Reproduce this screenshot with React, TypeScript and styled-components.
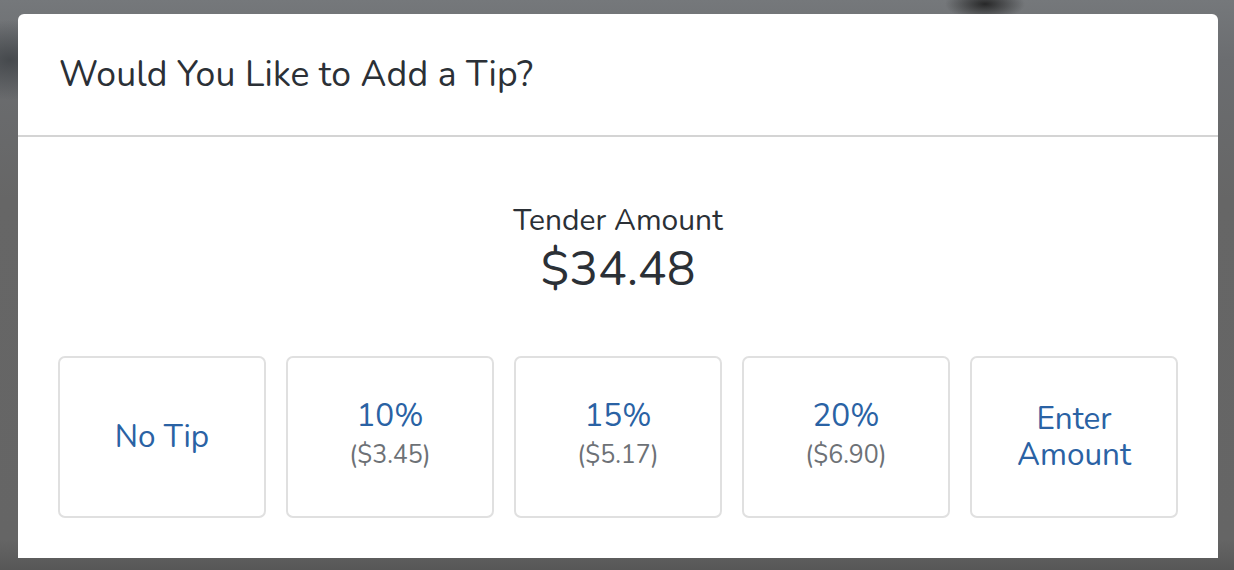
import styled, { createGlobalStyle } from "styled-components";

const GlobalStyle = createGlobalStyle`
    html, body {
        margin: 0;
        padding: 0;
        height: 100%;
    }
    body {
        font-family: "Nunito", "Lato", "Open Sans", sans-serif;
        background: #676767;
    }
`;

const Backdrop = styled.div`
    width: 1234px;
    height: 570px;
    box-sizing: border-box;
    padding: 14px 16px 0 18px;
    overflow: hidden;
    background:
        radial-gradient(ellipse 40px 16px at 985px 4px, rgba(20, 20, 20, 0.8), rgba(20, 20, 20, 0) 100%),
        radial-gradient(ellipse 60px 40px at 10px 60px, rgba(60, 64, 68, 0.8), rgba(60, 64, 68, 0) 100%),
        linear-gradient(180deg, #75787b 0px, #6b6d70 60px, #666666 200px, #656565 540px, #575757 570px);
`;

const Modal = styled.div`
    width: 1200px;
    height: 544px;
    background: #ffffff;
    border-radius: 6px 6px 0 0;
    display: flex;
    flex-direction: column;
`;

const Header = styled.div`
    height: 123px;
    box-sizing: border-box;
    padding: 0 41px;
    display: flex;
    align-items: center;
    border-bottom: 2px solid #d4d4d4;
`;

const Title = styled.h2`
    margin: 0;
    font-size: 35.5px;
    font-weight: 400;
    color: #2b3036;
    letter-spacing: 0.2px;
`;

const Body = styled.div`
    flex: 1;
    padding: 65px 40px 0;
    display: flex;
    flex-direction: column;
    align-items: center;
`;

const AmountLabel = styled.div`
    font-size: 30px;
    line-height: 38px;
    color: #2b3036;
`;

const AmountValue = styled.div`
    font-size: 48px;
    line-height: 58px;
    color: #2b3036;
    margin-bottom: 58px;
`;

const Options = styled.div`
    display: grid;
    grid-template-columns: repeat(5, 208px);
    gap: 20px;
`;

const Option = styled.button`
    height: 162px;
    box-sizing: border-box;
    border: 2px solid #e0e0e0;
    border-radius: 7px;
    background: #ffffff;
    font-family: inherit;
    display: flex;
    flex-direction: column;
    align-items: center;
    justify-content: center;
    padding: 0;
    cursor: pointer;
`;

const OptionMain = styled.span`
    font-size: 31.5px;
    line-height: 36px;
    color: #2a62a4;
`;

const OptionSub = styled.span`
    font-size: 25px;
    line-height: 36px;
    color: #6d7176;
    margin: 3px 0 3px;
`;

const tips = [
    { label: "10%", amount: "($3.45)" },
    { label: "15%", amount: "($5.17)" },
    { label: "20%", amount: "($6.90)" },
];

export default function App() {
    return (
        <>
            <GlobalStyle />
            <Backdrop>
                <Modal>
                    <Header>
                        <Title>Would You Like to Add a Tip?</Title>
                    </Header>
                    <Body>
                        <AmountLabel>Tender Amount</AmountLabel>
                        <AmountValue>$34.48</AmountValue>
                        <Options>
                            <Option>
                                <OptionMain>No Tip</OptionMain>
                            </Option>
                            {tips.map(tip => (
                                <Option key={tip.label}>
                                    <OptionMain>{tip.label}</OptionMain>
                                    <OptionSub>{tip.amount}</OptionSub>
                                </Option>
                            ))}
                            <Option>
                                <OptionMain>Enter<br />Amount</OptionMain>
                            </Option>
                        </Options>
                    </Body>
                </Modal>
            </Backdrop>
        </>
    );
}
